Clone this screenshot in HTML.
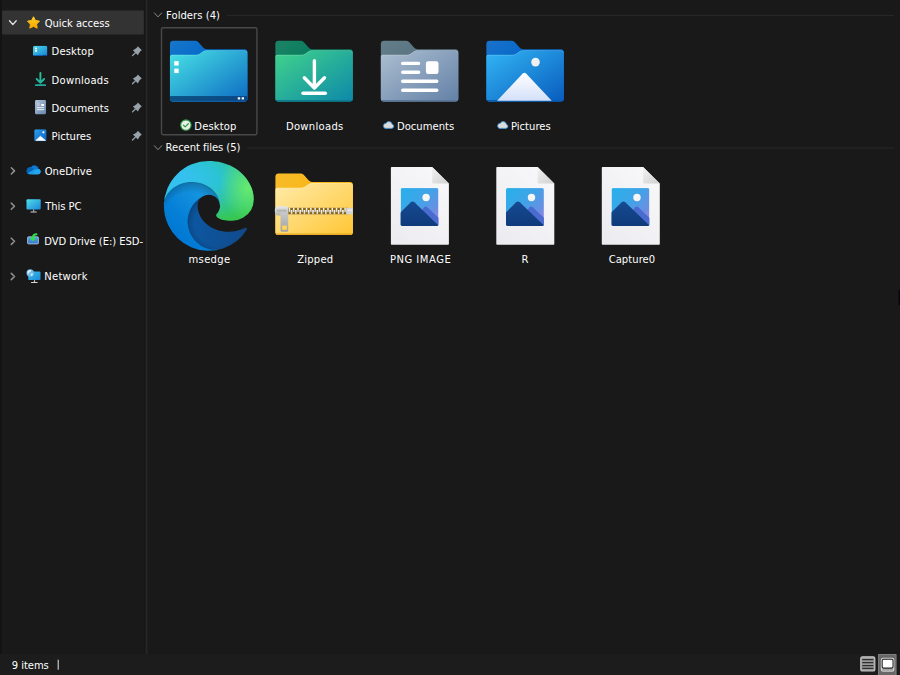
<!DOCTYPE html>
<html lang="en">
<head>
<meta charset="utf-8">
<title>File Explorer - Quick access</title>
<style>
html,body{margin:0;padding:0;}
body{width:900px;height:675px;overflow:hidden;background:#191919;position:relative;font-family:"DejaVu Sans","Liberation Sans",sans-serif;font-size:10.0px;line-height:14px;color:#fff;}
.t{position:absolute;white-space:nowrap;display:block;height:14px;}
.i{position:absolute;display:block;overflow:visible;}
.abs{position:absolute;}
#nav{left:0;top:0;width:146px;height:654px;}
</style>
</head>
<body>
<svg id="chrome" class="i" style="left:0;top:0" width="900" height="675">
<rect id="edge-left" x="0" y="0" width="1.9" height="654" fill="#131313"/>
<rect id="nav-sel" x="2.1" y="10.55" width="141.7" height="24" rx="0.6" fill="#333333"/>
<rect x="144.5" y="0" width="1.2" height="654" fill="#171717"/>
<rect id="split" x="145.6" y="0" width="1.8" height="654" fill="#272727"/>
<rect class="hr" x="227" y="14.9" width="667" height="1" fill="#282828"/>
<rect class="hr" x="247" y="147.5" width="647" height="1" fill="#282828"/>
<rect id="sel-item" x="161.5" y="27.7" width="95.4" height="107" rx="1.6" fill="none" stroke="#494949" stroke-width="1.4"/>
<rect id="status" x="0" y="654" width="900" height="21" fill="#1c1c1c"/>
<rect id="view-large" x="878.1" y="654" width="18.3" height="21" fill="#676767"/>
<path d="M878.6,675 V654.5 H895.9 V675" fill="none" stroke="#808080" stroke-width="1"/>
<rect id="sb-sep" x="57.7" y="659.7" width="1" height="10" fill="#e6e6e6"/>
<rect id="glitch" x="898.6" y="290" width="1.4" height="15" fill="#05050d"/>
</svg>
<nav id="nav" class="abs">
<svg class="i" style="left:8px;top:19px" width="11" height="9"><svg x="0" y="0" width="10" height="8" overflow="visible"><path d="M1.5,1.8 L4.85,5.4 L8.2,1.8" fill="none" stroke="#dedede" stroke-width="1.4" stroke-linecap="round" stroke-linejoin="round"/></svg></svg>
<svg class="i" style="left:26px;top:15px" width="16" height="17"><svg x="0" y="0.1" width="15" height="15" overflow="visible"><defs><linearGradient id="g1" x1="0" y1="0" x2="0" y2="1" gradientUnits="objectBoundingBox"><stop offset="0" stop-color="#ffcf24"/><stop offset="1" stop-color="#f5a600"/></linearGradient></defs><polygon points="7.50,1.70 9.44,5.33 13.49,6.05 10.64,9.02 11.20,13.10 7.50,11.30 3.80,13.10 4.36,9.02 1.51,6.05 5.56,5.33" fill="url(#g1)" stroke="url(#g1)" stroke-width="1" stroke-linejoin="round"/></svg></svg>
<span class="t" style="left:44.64px;top:17px;letter-spacing:-0.016px">Quick access</span>
<svg class="i" style="left:33px;top:45px" width="16" height="13"><svg x="0" y="0.7" width="14.4" height="10.4" overflow="visible"><defs><linearGradient id="g2" x1="0" y1="0" x2="1" y2="1" gradientUnits="objectBoundingBox"><stop offset="0" stop-color="#4fdbe8"/><stop offset="1" stop-color="#157fd6"/></linearGradient><clipPath id="g2c"><rect width="14.4" height="10.3" rx="1.7"/></clipPath></defs><g clip-path="url(#g2c)"><rect width="14.4" height="10.4" fill="url(#g2)"/><rect y="9.2" width="14.4" height="1.2" fill="#0f62b4"/><rect x="2" y="2.0" width="2" height="1.6" fill="#fff"/><rect x="2" y="4.3" width="2" height="1.7" fill="#fff"/></g><rect x="10.1" y="9.6" width="1.1" height="1" fill="#0c2c4c"/><rect x="11.9" y="9.6" width="1.1" height="1" fill="#0c2c4c"/></svg></svg>
<span class="t" style="left:51.62px;top:45px;letter-spacing:0.148px">Desktop</span>
<svg class="i" style="left:132px;top:46px" width="11" height="12"><svg x="0" y="0.1" width="10" height="10" overflow="visible"><path d="M5.8,0.2 L9.8,4.2 Q8.5,4.8 7.8,5.8 Q6.8,7 5.9,9.1 L0.9,4.1 Q3,3.2 4.2,2.2 Q5.2,1.5 5.8,0.2 Z" fill="#98a2aa"/><path d="M3.4,6.6 L0.5,9.5" stroke="#98a2aa" stroke-width="1.3" stroke-linecap="round"/></svg></svg>
<svg class="i" style="left:34px;top:71px" width="14" height="17"><svg x="0" y="0" width="13" height="16" overflow="visible"><defs><linearGradient id="g3" x1="0" y1="71" x2="0" y2="87" gradientUnits="userSpaceOnUse"><stop offset="0" stop-color="#2bc891"/><stop offset="1" stop-color="#1da8a0"/></linearGradient></defs><g transform="translate(0,-71)" stroke="url(#g3)" fill="none" stroke-linecap="round" stroke-linejoin="round"><path d="M6.4,73 V82.4 M2.7,79 L6.4,82.8 L10.1,79" stroke-width="1.9" transform="translate(0,0)"/><path d="M1.8,85.2 H11.2" stroke-width="1.7"/></g></svg></svg>
<span class="t" style="left:51.62px;top:74px;letter-spacing:0.259px">Downloads</span>
<svg class="i" style="left:132px;top:74px" width="11" height="12"><svg x="0" y="0.3" width="10" height="10" overflow="visible"><path d="M5.8,0.2 L9.8,4.2 Q8.5,4.8 7.8,5.8 Q6.8,7 5.9,9.1 L0.9,4.1 Q3,3.2 4.2,2.2 Q5.2,1.5 5.8,0.2 Z" fill="#98a2aa"/><path d="M3.4,6.6 L0.5,9.5" stroke="#98a2aa" stroke-width="1.3" stroke-linecap="round"/></svg></svg>
<svg class="i" style="left:35px;top:99px" width="12" height="17"><svg x="0" y="0.9" width="11" height="14.4" overflow="visible"><defs><linearGradient id="g4" x1="0" y1="0" x2="1" y2="1" gradientUnits="objectBoundingBox"><stop offset="0" stop-color="#b3c2d6"/><stop offset="1" stop-color="#6686b0"/></linearGradient></defs><rect width="11" height="14.4" rx="1.4" fill="url(#g4)"/><rect x="2" y="2.8" width="2.7" height="3.3" fill="#fff" opacity="0.28"/><rect x="6.2" y="4.1" width="2.9" height="2" rx="0.3" fill="#fff"/><rect x="2" y="7.3" width="7.1" height="0.9" fill="#f4f7fb"/><rect x="2" y="9.3" width="7.1" height="0.9" fill="#f4f7fb"/></svg></svg>
<span class="t" style="left:51.62px;top:102px;letter-spacing:0.034px">Documents</span>
<svg class="i" style="left:132px;top:102px" width="11" height="12"><svg x="0" y="0.4" width="10" height="10" overflow="visible"><path d="M5.8,0.2 L9.8,4.2 Q8.5,4.8 7.8,5.8 Q6.8,7 5.9,9.1 L0.9,4.1 Q3,3.2 4.2,2.2 Q5.2,1.5 5.8,0.2 Z" fill="#98a2aa"/><path d="M3.4,6.6 L0.5,9.5" stroke="#98a2aa" stroke-width="1.3" stroke-linecap="round"/></svg></svg>
<svg class="i" style="left:34px;top:129px" width="14" height="14"><svg x="0.2" y="0.2" width="12.4" height="12.1" overflow="visible"><defs><linearGradient id="g5" x1="0" y1="0" x2="1" y2="1" gradientUnits="objectBoundingBox"><stop offset="0" stop-color="#2e9fec"/><stop offset="1" stop-color="#0a62c8"/></linearGradient><clipPath id="g5c"><rect width="12.4" height="12.1" rx="1.6"/></clipPath></defs><g clip-path="url(#g5c)"><rect width="12.4" height="12.1" fill="url(#g5)"/><path d="M6.2,7 L11.3,11.2 H1.6 Z" fill="#fff" stroke="#fff" stroke-width="0.6" stroke-linejoin="round"/><circle cx="9.2" cy="3.1" r="1.1" fill="#fff"/></g></svg></svg>
<span class="t" style="left:51.62px;top:130px;letter-spacing:-0.001px">Pictures</span>
<svg class="i" style="left:132px;top:130px" width="11" height="12"><svg x="0" y="0.5" width="10" height="10" overflow="visible"><path d="M5.8,0.2 L9.8,4.2 Q8.5,4.8 7.8,5.8 Q6.8,7 5.9,9.1 L0.9,4.1 Q3,3.2 4.2,2.2 Q5.2,1.5 5.8,0.2 Z" fill="#98a2aa"/><path d="M3.4,6.6 L0.5,9.5" stroke="#98a2aa" stroke-width="1.3" stroke-linecap="round"/></svg></svg>
<svg class="i" style="left:9px;top:165px" width="9" height="12"><svg x="0" y="0.9" width="8" height="10" overflow="visible"><path d="M2.3,1.9 L5.5,5 L2.3,8.1" fill="none" stroke="#8e8e8e" stroke-width="1.6" stroke-linecap="round" stroke-linejoin="round"/></svg></svg>
<svg class="i" style="left:26px;top:164px" width="17" height="12"><svg x="0.1" y="0.7" width="15" height="10" overflow="visible"><path d="M3.3,9.5 H12 A2.6,2.6 0 0 0 12.6,4.4 A4.2,4.2 0 0 0 4.9,2.6 A3.5,3.5 0 0 0 3.3,9.5 Z" fill="#0f78d4"/><path d="M3.3,9.5 A3.5,3.5 0 0 1 4.9,2.6 Q6,3.2 9.5,5.3 L5,9.5 Z" fill="#0364b8"/><path d="M8.2,4.5 L12.6,4.4 A2.6,2.6 0 0 1 12,9.5 H3.3 Q2.2,9.2 1.6,8.6 Z" fill="#1c9be8"/><path d="M10,5.2 L12.6,4.4 A2.6,2.6 0 0 1 12,9.5 H6 Z" fill="#28a8ea" opacity="0.8"/></svg></svg>
<span class="t" style="left:44.74px;top:165px;letter-spacing:0.013px">OneDrive</span>
<svg class="i" style="left:9px;top:201px" width="9" height="12"><svg x="0" y="0.2" width="8" height="10" overflow="visible"><path d="M2.3,1.9 L5.5,5 L2.3,8.1" fill="none" stroke="#8e8e8e" stroke-width="1.6" stroke-linecap="round" stroke-linejoin="round"/></svg></svg>
<svg class="i" style="left:26px;top:199px" width="16" height="15"><svg x="0.5" y="0.2" width="14.2" height="13.6" overflow="visible"><defs><linearGradient id="g6" x1="0" y1="0" x2="1" y2="1" gradientUnits="objectBoundingBox"><stop offset="0" stop-color="#4fe0e6"/><stop offset="1" stop-color="#1a86dc"/></linearGradient></defs><rect width="14.2" height="10.3" rx="1.1" fill="url(#g6)"/><rect x="6.5" y="10.3" width="1.2" height="2" fill="#a8b0b8"/><rect x="3.9" y="12.2" width="6.4" height="1.1" rx="0.5" fill="#d0d0d0"/></svg></svg>
<span class="t" style="left:45.33px;top:200px;letter-spacing:-0.095px">This PC</span>
<svg class="i" style="left:9px;top:236px" width="9" height="12"><svg x="0" y="0.3" width="8" height="10" overflow="visible"><path d="M2.3,1.9 L5.5,5 L2.3,8.1" fill="none" stroke="#8e8e8e" stroke-width="1.6" stroke-linecap="round" stroke-linejoin="round"/></svg></svg>
<svg class="i" style="left:27px;top:233px" width="14" height="13"><svg x="0" y="0.4" width="12.4" height="11" overflow="visible"><defs><linearGradient id="g7" x1="0" y1="0" x2="0" y2="1" gradientUnits="objectBoundingBox"><stop offset="0" stop-color="#5c9ee6"/><stop offset="1" stop-color="#3878c8"/></linearGradient></defs><rect x="0.6" y="3.4" width="10.8" height="7.1" rx="0.9" fill="url(#g7)" stroke="#b4cfec" stroke-width="0.8"/><path d="M9.5,0.9 Q5.9,1.0 5.8,4.8" fill="none" stroke="#2fe04c" stroke-width="2" stroke-linecap="round"/><path d="M2.6,4.5 H9.1 L5.8,7.7 Z" fill="#2fe04c" stroke="#2fe04c" stroke-width="0.5" stroke-linejoin="round"/></svg></svg>
<span class="t" style="left:44.32px;top:235px;letter-spacing:-0.058px">DVD Drive (E:) ESD-</span>
<svg class="i" style="left:9px;top:271px" width="9" height="12"><svg x="0" y="0.5" width="8" height="10" overflow="visible"><path d="M2.3,1.9 L5.5,5 L2.3,8.1" fill="none" stroke="#8e8e8e" stroke-width="1.6" stroke-linecap="round" stroke-linejoin="round"/></svg></svg>
<svg class="i" style="left:26px;top:269px" width="16" height="16"><svg x="0.3" y="0" width="14.4" height="14.6" overflow="visible"><defs><linearGradient id="g8" x1="0" y1="0" x2="1" y2="1" gradientUnits="objectBoundingBox"><stop offset="0" stop-color="#3cc4e6"/><stop offset="1" stop-color="#1a86dc"/></linearGradient></defs><rect x="2" y="2.5" width="12.2" height="8.6" rx="0.9" fill="url(#g8)"/><rect x="7.6" y="11.1" width="1.2" height="1.9" fill="#b8c0c8"/><rect x="4.6" y="12.9" width="6.8" height="1" rx="0.5" fill="#d8d8d8"/><circle cx="3.9" cy="3.9" r="3.7" fill="#6cbcf0"/><path d="M1.2,2.4 Q3,0.6 4.9,1.2 Q4.6,3 3,3.6 Q2.4,5.2 1.2,4.8 Z" fill="#e4f4fe"/><path d="M4.2,4.8 Q5.8,4 6.9,5 Q6.2,6.8 4.8,7 Z" fill="#d4ecfc"/></svg></svg>
<span class="t" style="left:44.32px;top:270px;letter-spacing:0.237px">Network</span>
</nav>
<main id="main">
<section id="folders">
<svg class="i" style="left:153px;top:11px" width="11" height="10"><svg x="0" y="0.4" width="10" height="8" overflow="visible"><path d="M1.4,1.5 L5,5.5 L8.7,1.5" fill="none" stroke="#8a8a8a" stroke-width="1" stroke-linecap="round" stroke-linejoin="round"/></svg></svg>
<span class="t" style="left:166.02px;top:9px;letter-spacing:0.053px">Folders (4)</span>
<svg class="i" style="left:169px;top:40px" width="80" height="63"><svg x="0.95" y="0.65" width="77.5" height="60.8" viewBox="0 0 78.4 61.4" preserveAspectRatio="none" overflow="visible"><defs><linearGradient id="g10" x1="0.05" y1="0.05" x2="0.95" y2="0.95" gradientUnits="objectBoundingBox"><stop offset="0" stop-color="#45dde3"/><stop offset="1" stop-color="#1070c4"/></linearGradient><linearGradient id="g10h" x1="0" y1="0" x2="0.4" y2="0.3"><stop offset="0" stop-color="#fff" stop-opacity="0.07"/><stop offset="1" stop-color="#fff" stop-opacity="0"/></linearGradient><clipPath id="g10c"><path d="M0,16.3 Q0,14.3 2,14.3 H26.3 Q28.4,14.3 30,13.2 L33.6,10.7 Q35.2,9.6 37.2,9.6 H75.4 Q78.4,9.6 78.4,12.6 V58.4 Q78.4,61.4 75.4,61.4 H3 Q0,61.4 0,58.4 Z"/></clipPath></defs><path d="M0,3.4 Q0,0 3.4,0 H25.3 Q27.3,0 28.6,1.4 L33.8,7.2 Q35,8.6 37,8.6 H75.4 Q78.4,8.6 78.4,11.6 V58.4 Q78.4,61.4 75.4,61.4 H3 Q0,61.4 0,58.4 Z" fill="#066bc8"/><path d="M0,3.4 Q0,0 3.4,0 H25.3 Q27.3,0 28.6,1.4 L33.8,7.2 Q35,8.6 37,8.6 H75.4 Q78.4,8.6 78.4,11.6 V58.4 Q78.4,61.4 75.4,61.4 H3 Q0,61.4 0,58.4 Z" fill="url(#g10h)"/><path d="M0,16.3 Q0,14.3 2,14.3 H26.3 Q28.4,14.3 30,13.2 L33.6,10.7 Q35.2,9.6 37.2,9.6 H75.4 Q78.4,9.6 78.4,12.6 V58.4 Q78.4,61.4 75.4,61.4 H3 Q0,61.4 0,58.4 Z" fill="url(#g10)"/><g clip-path="url(#g10c)"><rect x="0" y="60" width="78.4" height="1.4" fill="#1266b4"/><path d="M0.4,17 V16.3 Q0.4,14.7 2,14.7 H26.3 Q28.4,14.7 30,13.6 L33.6,11.1 Q35.2,10 37.2,10 H75.4 Q78,10 78,12.6" fill="none" stroke="#fff" stroke-opacity="0.22" stroke-width="0.8"/><g transform="scale(1.0116,1.0099) translate(0,0)"><defs><linearGradient id="g9" x1="0" y1="0" x2="1" y2="0" gradientUnits="objectBoundingBox"><stop offset="0" stop-color="#0c5384"/><stop offset="1" stop-color="#0a4684"/></linearGradient></defs><rect x="0" y="55.4" width="78.4" height="6" fill="url(#g9)"/><rect x="0" y="60.2" width="78.4" height="1.2" fill="#1266b4"/><rect x="4.3" y="20.5" width="4.4" height="4.4" fill="#fff"/><rect x="4.3" y="28" width="4.4" height="4.4" fill="#fff"/><rect x="67.8" y="56.6" width="2.4" height="2.2" fill="#f4f8ff"/><rect x="71.7" y="56.6" width="2.4" height="2.2" fill="#f4f8ff"/></g></g></svg></svg>
<svg class="i" style="left:180px;top:119px" width="13" height="14"><svg x="0" y="0.2" width="12" height="12" overflow="visible"><circle cx="5.9" cy="5.9" r="5.2" fill="#e9efe9" stroke="#2f9d40" stroke-width="1.1"/><path d="M3.5,6.1 L5.2,7.7 L8.3,4.5" fill="none" stroke="#2f9d40" stroke-width="1.3" stroke-linecap="round" stroke-linejoin="round"/></svg></svg>
<span class="t" style="left:194.32px;top:120px;letter-spacing:0.115px">Desktop</span>
<svg class="i" style="left:275px;top:40px" width="79" height="63"><svg x="0.35" y="0.65" width="77.5" height="60.8" viewBox="0 0 78.4 61.4" preserveAspectRatio="none" overflow="visible"><defs><linearGradient id="g11" x1="0.05" y1="0.05" x2="0.95" y2="0.95" gradientUnits="objectBoundingBox"><stop offset="0" stop-color="#3fd08c"/><stop offset="1" stop-color="#0f8ca8"/></linearGradient><linearGradient id="g11h" x1="0" y1="0" x2="0.4" y2="0.3"><stop offset="0" stop-color="#fff" stop-opacity="0.07"/><stop offset="1" stop-color="#fff" stop-opacity="0"/></linearGradient><clipPath id="g11c"><path d="M0,16.3 Q0,14.3 2,14.3 H26.3 Q28.4,14.3 30,13.2 L33.6,10.7 Q35.2,9.6 37.2,9.6 H75.4 Q78.4,9.6 78.4,12.6 V58.4 Q78.4,61.4 75.4,61.4 H3 Q0,61.4 0,58.4 Z"/></clipPath></defs><path d="M0,3.4 Q0,0 3.4,0 H25.3 Q27.3,0 28.6,1.4 L33.8,7.2 Q35,8.6 37,8.6 H75.4 Q78.4,8.6 78.4,11.6 V58.4 Q78.4,61.4 75.4,61.4 H3 Q0,61.4 0,58.4 Z" fill="#0b7b5c"/><path d="M0,3.4 Q0,0 3.4,0 H25.3 Q27.3,0 28.6,1.4 L33.8,7.2 Q35,8.6 37,8.6 H75.4 Q78.4,8.6 78.4,11.6 V58.4 Q78.4,61.4 75.4,61.4 H3 Q0,61.4 0,58.4 Z" fill="url(#g11h)"/><path d="M0,16.3 Q0,14.3 2,14.3 H26.3 Q28.4,14.3 30,13.2 L33.6,10.7 Q35.2,9.6 37.2,9.6 H75.4 Q78.4,9.6 78.4,12.6 V58.4 Q78.4,61.4 75.4,61.4 H3 Q0,61.4 0,58.4 Z" fill="url(#g11)"/><g clip-path="url(#g11c)"><rect x="0" y="60" width="78.4" height="1.4" fill="#0c7796"/><path d="M0.4,17 V16.3 Q0.4,14.7 2,14.7 H26.3 Q28.4,14.7 30,13.6 L33.6,11.1 Q35.2,10 37.2,10 H75.4 Q78,10 78,12.6" fill="none" stroke="#fff" stroke-opacity="0.22" stroke-width="0.8"/><g transform="scale(1.0116,1.0099) translate(-0.25,-0.25)"><path d="M39.3,20.4 V46.5 M29.2,37.3 L39.3,47.6 L49.4,37.3" fill="none" stroke="#fff" stroke-width="3.4" stroke-linecap="round" stroke-linejoin="round"/><path d="M27.9,52.8 H50.2" stroke="#fff" stroke-width="3.4" stroke-linecap="round"/></g></g></svg></svg>
<span class="t" style="left:285.92px;top:120px;letter-spacing:0.309px">Downloads</span>
<svg class="i" style="left:380px;top:40px" width="80" height="63"><svg x="0.85" y="0.65" width="77.5" height="60.8" viewBox="0 0 78.4 61.4" preserveAspectRatio="none" overflow="visible"><defs><linearGradient id="g12" x1="0.05" y1="0.05" x2="0.95" y2="0.95" gradientUnits="objectBoundingBox"><stop offset="0" stop-color="#a9bccf"/><stop offset="1" stop-color="#6683a8"/></linearGradient><linearGradient id="g12h" x1="0" y1="0" x2="0.4" y2="0.3"><stop offset="0" stop-color="#fff" stop-opacity="0.07"/><stop offset="1" stop-color="#fff" stop-opacity="0"/></linearGradient><clipPath id="g12c"><path d="M0,16.3 Q0,14.3 2,14.3 H26.3 Q28.4,14.3 30,13.2 L33.6,10.7 Q35.2,9.6 37.2,9.6 H75.4 Q78.4,9.6 78.4,12.6 V58.4 Q78.4,61.4 75.4,61.4 H3 Q0,61.4 0,58.4 Z"/></clipPath></defs><path d="M0,3.4 Q0,0 3.4,0 H25.3 Q27.3,0 28.6,1.4 L33.8,7.2 Q35,8.6 37,8.6 H75.4 Q78.4,8.6 78.4,11.6 V58.4 Q78.4,61.4 75.4,61.4 H3 Q0,61.4 0,58.4 Z" fill="#5a7482"/><path d="M0,3.4 Q0,0 3.4,0 H25.3 Q27.3,0 28.6,1.4 L33.8,7.2 Q35,8.6 37,8.6 H75.4 Q78.4,8.6 78.4,11.6 V58.4 Q78.4,61.4 75.4,61.4 H3 Q0,61.4 0,58.4 Z" fill="url(#g12h)"/><path d="M0,16.3 Q0,14.3 2,14.3 H26.3 Q28.4,14.3 30,13.2 L33.6,10.7 Q35.2,9.6 37.2,9.6 H75.4 Q78.4,9.6 78.4,12.6 V58.4 Q78.4,61.4 75.4,61.4 H3 Q0,61.4 0,58.4 Z" fill="url(#g12)"/><g clip-path="url(#g12c)"><rect x="0" y="60" width="78.4" height="1.4" fill="#5a7698"/><path d="M0.4,17 V16.3 Q0.4,14.7 2,14.7 H26.3 Q28.4,14.7 30,13.6 L33.6,11.1 Q35.2,10 37.2,10 H75.4 Q78,10 78,12.6" fill="none" stroke="#fff" stroke-opacity="0.22" stroke-width="0.8"/><g transform="scale(1.0116,1.0099) translate(-0.25,-0.25)"><path d="M22.1,23 H38 M22.1,31.9 H38 M22.1,40.9 H56.2 M22.1,49.9 H56.2" stroke="#fff" stroke-width="3.4" stroke-linecap="round"/><rect x="45.3" y="20.8" width="12.6" height="12.8" rx="2.2" fill="#fff"/></g></g></svg></svg>
<svg class="i" style="left:382px;top:121px" width="14" height="9"><svg x="0.3" y="0" width="12" height="8" overflow="visible"><path d="M2.8,7.4 H9.4 A2.1,2.1 0 0 0 9.9,3.3 A3.3,3.3 0 0 0 3.8,2.2 A2.7,2.7 0 0 0 2.8,7.4 Z" fill="#dcdcdc" stroke="#3a92d8" stroke-width="0.9"/></svg></svg>
<span class="t" style="left:396.92px;top:120px;letter-spacing:0.034px">Documents</span>
<svg class="i" style="left:486px;top:40px" width="79" height="63"><svg x="0.35" y="0.65" width="77.5" height="60.8" viewBox="0 0 78.4 61.4" preserveAspectRatio="none" overflow="visible"><defs><linearGradient id="g14" x1="0.05" y1="0.05" x2="0.95" y2="0.95" gradientUnits="objectBoundingBox"><stop offset="0" stop-color="#31b2f2"/><stop offset="1" stop-color="#0a60c0"/></linearGradient><linearGradient id="g14h" x1="0" y1="0" x2="0.4" y2="0.3"><stop offset="0" stop-color="#fff" stop-opacity="0.07"/><stop offset="1" stop-color="#fff" stop-opacity="0"/></linearGradient><clipPath id="g14c"><path d="M0,16.3 Q0,14.3 2,14.3 H26.3 Q28.4,14.3 30,13.2 L33.6,10.7 Q35.2,9.6 37.2,9.6 H75.4 Q78.4,9.6 78.4,12.6 V58.4 Q78.4,61.4 75.4,61.4 H3 Q0,61.4 0,58.4 Z"/></clipPath></defs><path d="M0,3.4 Q0,0 3.4,0 H25.3 Q27.3,0 28.6,1.4 L33.8,7.2 Q35,8.6 37,8.6 H75.4 Q78.4,8.6 78.4,11.6 V58.4 Q78.4,61.4 75.4,61.4 H3 Q0,61.4 0,58.4 Z" fill="#0868c8"/><path d="M0,3.4 Q0,0 3.4,0 H25.3 Q27.3,0 28.6,1.4 L33.8,7.2 Q35,8.6 37,8.6 H75.4 Q78.4,8.6 78.4,11.6 V58.4 Q78.4,61.4 75.4,61.4 H3 Q0,61.4 0,58.4 Z" fill="url(#g14h)"/><path d="M0,16.3 Q0,14.3 2,14.3 H26.3 Q28.4,14.3 30,13.2 L33.6,10.7 Q35.2,9.6 37.2,9.6 H75.4 Q78.4,9.6 78.4,12.6 V58.4 Q78.4,61.4 75.4,61.4 H3 Q0,61.4 0,58.4 Z" fill="url(#g14)"/><g clip-path="url(#g14c)"><rect x="0" y="60" width="78.4" height="1.4" fill="#0a58b0"/><path d="M0.4,17 V16.3 Q0.4,14.7 2,14.7 H26.3 Q28.4,14.7 30,13.6 L33.6,11.1 Q35.2,10 37.2,10 H75.4 Q78,10 78,12.6" fill="none" stroke="#fff" stroke-opacity="0.22" stroke-width="0.8"/><g transform="scale(1.0116,1.0099) translate(-0.25,-0.25)"><defs><linearGradient id="g13" x1="0" y1="0" x2="0" y2="1" gradientUnits="objectBoundingBox"><stop offset="0" stop-color="#ffffff"/><stop offset="1" stop-color="#d4e0fa"/></linearGradient></defs><path d="M11,60.4 L36.6,33.2 Q38.3,31.4 40,33.2 L65.6,60.4 Z" fill="url(#g13)"/><circle cx="49.4" cy="21.7" r="4.3" fill="#f0f0f0"/></g></g></svg></svg>
<svg class="i" style="left:496px;top:121px" width="14" height="9"><svg x="0.5" y="0" width="12" height="8" overflow="visible"><path d="M2.8,7.4 H9.4 A2.1,2.1 0 0 0 9.9,3.3 A3.3,3.3 0 0 0 3.8,2.2 A2.7,2.7 0 0 0 2.8,7.4 Z" fill="#dcdcdc" stroke="#3a92d8" stroke-width="0.9"/></svg></svg>
<span class="t" style="left:510.92px;top:120px;letter-spacing:0.027px">Pictures</span>
</section>
<section id="recent">
<svg class="i" style="left:153px;top:144px" width="11" height="10"><svg x="0" y="0.2" width="10" height="8" overflow="visible"><path d="M1.4,1.5 L5,5.5 L8.7,1.5" fill="none" stroke="#8a8a8a" stroke-width="1" stroke-linecap="round" stroke-linejoin="round"/></svg></svg>
<span class="t" style="left:165.62px;top:141px;letter-spacing:-0.049px">Recent files (5)</span>
<svg class="i" style="left:163px;top:161px" width="92" height="91"><svg x="0.9" y="0" width="89.8" height="89.8" viewBox="0 0 256 256" preserveAspectRatio="none" overflow="visible"><defs>
<radialGradient id="eb" cx="161.83" cy="68.91" r="95.38" gradientTransform="matrix(1 0 0 -.95 0 248.84)" gradientUnits="userSpaceOnUse"><stop offset=".72" stop-opacity="0"/><stop offset=".95" stop-opacity=".53"/><stop offset="1"/></radialGradient>
<radialGradient id="ed" cx="-340.29" cy="62.99" r="143.24" gradientTransform="matrix(.15 -.99 -.8 -.12 176.64 -125.4)" gradientUnits="userSpaceOnUse"><stop offset=".76" stop-opacity="0"/><stop offset=".95" stop-opacity=".5"/><stop offset="1"/></radialGradient>
<radialGradient id="ee" cx="113.37" cy="570.21" r="202.43" gradientTransform="matrix(-.04 1 2.13 .08 -1179.54 -106.69)" gradientUnits="userSpaceOnUse"><stop offset="0" stop-color="#35c1f1"/><stop offset=".11" stop-color="#34c1ed"/><stop offset=".23" stop-color="#2fc2df"/><stop offset=".31" stop-color="#2bc3d2"/><stop offset=".67" stop-color="#36c752"/></radialGradient>
<radialGradient id="ef" cx="376.52" cy="567.97" r="97.34" gradientTransform="matrix(.28 .96 .78 -.23 -303.76 -148.5)" gradientUnits="userSpaceOnUse"><stop offset="0" stop-color="#66eb6e"/><stop offset="1" stop-color="#66eb6e" stop-opacity="0"/></radialGradient>
<linearGradient id="ea" x1="63.33" y1="84.03" x2="241.67" y2="84.03" gradientTransform="matrix(1 0 0 -1 0 266)" gradientUnits="userSpaceOnUse"><stop offset="0" stop-color="#0c59a4"/><stop offset="1" stop-color="#114a8b"/></linearGradient>
<linearGradient id="ec" x1="157.35" y1="161.39" x2="45.96" y2="40.06" gradientTransform="matrix(1 0 0 -1 0 266)" gradientUnits="userSpaceOnUse"><stop offset="0" stop-color="#1b9de2"/><stop offset=".16" stop-color="#1595df"/><stop offset=".67" stop-color="#0680d7"/><stop offset="1" stop-color="#0078d4"/></linearGradient>
</defs><path d="M235.68 195.46a93.730 93.730 0 0 1-10.540 4.710 101.870 101.870 0 0 1-35.900 6.460c-47.320 0-88.540-32.550-88.540-74.320A31.480 31.480 0 0 1 117.130 105c-42.800 1.800-53.800 46.400-53.800 72.530 0 73.880 68.090 81.370 82.760 81.370 7.910 0 19.840-2.300 27-4.560l1.310-.44a128.340 128.340 0 0 0 66.600-52.800 4 4 0 0 0-5.320-5.640Z" transform="translate(-4.63 -4.92)" fill="url(#ea)"/><path d="M235.68 195.46a93.730 93.730 0 0 1-10.540 4.710 101.870 101.870 0 0 1-35.900 6.460c-47.320 0-88.540-32.550-88.540-74.320A31.480 31.480 0 0 1 117.130 105c-42.800 1.800-53.800 46.400-53.800 72.530 0 73.880 68.090 81.370 82.760 81.370 7.910 0 19.840-2.300 27-4.560l1.310-.44a128.340 128.340 0 0 0 66.600-52.800 4 4 0 0 0-5.320-5.640Z" transform="translate(-4.63 -4.92)" fill="url(#eb)" opacity=".35"/><path d="M110.340 246.340A79.200 79.200 0 0 1 87.600 225a80.720 80.720 0 0 1 29.530-120c3.120-1.470 8.450-4.130 15.540-4a32.350 32.350 0 0 1 25.690 13 31.880 31.880 0 0 1 6.360 18.660c0-.21 24.460-79.600-80-79.600-43.900 0-80 41.660-80 78.210a130.150 130.150 0 0 0 12.110 56 128 128 0 0 0 156.380 67.110 75.550 75.550 0 0 1-62.780-8Z" transform="translate(-4.63 -4.92)" fill="url(#ec)"/><path d="M110.340 246.340A79.200 79.200 0 0 1 87.600 225a80.720 80.720 0 0 1 29.530-120c3.120-1.470 8.450-4.130 15.540-4a32.350 32.350 0 0 1 25.690 13 31.880 31.880 0 0 1 6.360 18.660c0-.21 24.460-79.600-80-79.600-43.900 0-80 41.660-80 78.210a130.150 130.150 0 0 0 12.110 56 128 128 0 0 0 156.380 67.110 75.550 75.550 0 0 1-62.780-8Z" transform="translate(-4.63 -4.92)" fill="url(#ed)" opacity=".41"/><path d="M156.940 153.780c-.81 1.050-3.300 2.500-3.300 5.660 0 2.610 1.700 5.120 4.720 7.230 14.380 10 41.490 8.680 41.560 8.680a59.560 59.560 0 0 0 30.270-8.350 61.380 61.380 0 0 0 30.430-52.880c.26-22.410-8-37.310-11.340-43.910-21.190-41.450-66.930-65.290-116.670-65.290a128 128 0 0 0-128 126.200c.48-36.540 36.800-66.050 80-66.050 3.500 0 23.460.34 42 10.070 16.340 8.580 24.900 18.940 30.850 29.210 6.180 10.670 7.280 24.150 7.280 29.520s-2.740 13.330-7.800 19.910Z" transform="translate(-4.63 -4.92)" fill="url(#ee)"/><path d="M156.940 153.780c-.81 1.050-3.300 2.500-3.300 5.660 0 2.610 1.700 5.120 4.720 7.230 14.380 10 41.490 8.680 41.560 8.680a59.560 59.560 0 0 0 30.270-8.350 61.380 61.380 0 0 0 30.430-52.880c.26-22.410-8-37.310-11.340-43.910-21.190-41.450-66.930-65.290-116.670-65.290a128 128 0 0 0-128 126.200c.48-36.540 36.800-66.050 80-66.050 3.500 0 23.460.34 42 10.070 16.340 8.580 24.900 18.940 30.850 29.210 6.180 10.670 7.280 24.150 7.280 29.520s-2.740 13.330-7.800 19.910Z" transform="translate(-4.63 -4.92)" fill="url(#ef)"/></svg></svg>
<svg class="i" style="left:275px;top:173px" width="79" height="63"><svg x="0.4" y="0.4" width="77.5" height="61.5" viewBox="0 0 78.4 61.4" preserveAspectRatio="none" overflow="visible"><defs><linearGradient id="g16" x1="0.05" y1="0.05" x2="0.95" y2="0.95" gradientUnits="objectBoundingBox"><stop offset="0" stop-color="#ffe9a4"/><stop offset="1" stop-color="#ffc83a"/></linearGradient><linearGradient id="g16h" x1="0" y1="0" x2="0.4" y2="0.3"><stop offset="0" stop-color="#fff" stop-opacity="0.07"/><stop offset="1" stop-color="#fff" stop-opacity="0"/></linearGradient><clipPath id="g16c"><path d="M0,16.3 Q0,14.3 2,14.3 H26.3 Q28.4,14.3 30,13.2 L33.6,10.7 Q35.2,9.6 37.2,9.6 H75.4 Q78.4,9.6 78.4,12.6 V58.4 Q78.4,61.4 75.4,61.4 H3 Q0,61.4 0,58.4 Z"/></clipPath></defs><path d="M0,3.4 Q0,0 3.4,0 H25.3 Q27.3,0 28.6,1.4 L33.8,7.2 Q35,8.6 37,8.6 H75.4 Q78.4,8.6 78.4,11.6 V58.4 Q78.4,61.4 75.4,61.4 H3 Q0,61.4 0,58.4 Z" fill="#f8b71a"/><path d="M0,3.4 Q0,0 3.4,0 H25.3 Q27.3,0 28.6,1.4 L33.8,7.2 Q35,8.6 37,8.6 H75.4 Q78.4,8.6 78.4,11.6 V58.4 Q78.4,61.4 75.4,61.4 H3 Q0,61.4 0,58.4 Z" fill="url(#g16h)"/><path d="M0,16.3 Q0,14.3 2,14.3 H26.3 Q28.4,14.3 30,13.2 L33.6,10.7 Q35.2,9.6 37.2,9.6 H75.4 Q78.4,9.6 78.4,12.6 V58.4 Q78.4,61.4 75.4,61.4 H3 Q0,61.4 0,58.4 Z" fill="url(#g16)"/><g clip-path="url(#g16c)"><rect x="0" y="60" width="78.4" height="1.4" fill="#e9a71e"/><path d="M0.4,17 V16.3 Q0.4,14.7 2,14.7 H26.3 Q28.4,14.7 30,13.6 L33.6,11.1 Q35.2,10 37.2,10 H75.4 Q78,10 78,12.6" fill="none" stroke="#fff" stroke-opacity="0.22" stroke-width="0.8"/><g transform="scale(1.0116,0.9984) translate(-0.3,-0.1)"><defs><linearGradient id="g15t" x1="0" y1="0" x2="0" y2="1" gradientUnits="objectBoundingBox"><stop offset="0" stop-color="#ffffff"/><stop offset="1" stop-color="#cfcfcf"/></linearGradient></defs><rect x="11" y="34.5" width="62" height="6.5" fill="#8a6512"/><rect x="13.60" y="34.5" width="1.5" height="4.3" fill="url(#g15t)"/><rect x="15.70" y="36.7" width="1.6" height="4.3" fill="url(#g15t)"/><rect x="17.88" y="34.5" width="1.5" height="4.3" fill="url(#g15t)"/><rect x="19.98" y="36.7" width="1.6" height="4.3" fill="url(#g15t)"/><rect x="22.16" y="34.5" width="1.5" height="4.3" fill="url(#g15t)"/><rect x="24.26" y="36.7" width="1.6" height="4.3" fill="url(#g15t)"/><rect x="26.44" y="34.5" width="1.5" height="4.3" fill="url(#g15t)"/><rect x="28.54" y="36.7" width="1.6" height="4.3" fill="url(#g15t)"/><rect x="30.72" y="34.5" width="1.5" height="4.3" fill="url(#g15t)"/><rect x="32.82" y="36.7" width="1.6" height="4.3" fill="url(#g15t)"/><rect x="35.00" y="34.5" width="1.5" height="4.3" fill="url(#g15t)"/><rect x="37.10" y="36.7" width="1.6" height="4.3" fill="url(#g15t)"/><rect x="39.28" y="34.5" width="1.5" height="4.3" fill="url(#g15t)"/><rect x="41.38" y="36.7" width="1.6" height="4.3" fill="url(#g15t)"/><rect x="43.56" y="34.5" width="1.5" height="4.3" fill="url(#g15t)"/><rect x="45.66" y="36.7" width="1.6" height="4.3" fill="url(#g15t)"/><rect x="47.84" y="34.5" width="1.5" height="4.3" fill="url(#g15t)"/><rect x="49.94" y="36.7" width="1.6" height="4.3" fill="url(#g15t)"/><rect x="52.12" y="34.5" width="1.5" height="4.3" fill="url(#g15t)"/><rect x="54.22" y="36.7" width="1.6" height="4.3" fill="url(#g15t)"/><rect x="56.40" y="34.5" width="1.5" height="4.3" fill="url(#g15t)"/><rect x="58.50" y="36.7" width="1.6" height="4.3" fill="url(#g15t)"/><rect x="60.68" y="34.5" width="1.5" height="4.3" fill="url(#g15t)"/><rect x="62.78" y="36.7" width="1.6" height="4.3" fill="url(#g15t)"/><rect x="64.96" y="34.5" width="1.5" height="4.3" fill="url(#g15t)"/><rect x="67.06" y="36.7" width="1.6" height="4.3" fill="url(#g15t)"/><rect x="69.24" y="34.5" width="1.5" height="4.3" fill="url(#g15t)"/><rect x="71.34" y="36.7" width="1.6" height="4.3" fill="url(#g15t)"/><rect x="71.1" y="34.5" width="7.4" height="6.5" fill="#d4d4d4"/><rect x="72.6" y="36.2" width="4.4" height="1.2" fill="#f0f0f0"/></g></g><defs><linearGradient id="g15s" x1="0" y1="0" x2="0" y2="1" gradientUnits="objectBoundingBox"><stop offset="0" stop-color="#e6e6e6"/><stop offset="1" stop-color="#b4b4b4"/></linearGradient><linearGradient id="g15p" x1="0" y1="0" x2="0" y2="1" gradientUnits="objectBoundingBox"><stop offset="0" stop-color="#c8c8c8"/><stop offset="1" stop-color="#a2a2a2"/></linearGradient></defs><path d="M2.2,32.9 H11 Q13,32.9 13,34.9 V40 Q13,42 11,42 H2.2 Q-0.6,42 -0.6,37.4 Q-0.6,32.9 2.2,32.9 Z" fill="url(#g15s)"/><rect x="1.8" y="36.2" width="9.6" height="1.8" fill="#9c9c9c" opacity="0.55"/><path d="M5.2,39.2 H13 V57.1 Q13,58.2 11.9,58.2 H6.3 Q5.2,58.2 5.2,57.1 Z" fill="url(#g15p)"/><rect x="6.9" y="52.1" width="4.7" height="4.2" fill="#ffd552"/></svg></svg>
<svg class="i" style="left:390px;top:167px" width="60" height="79"><svg x="0.9" y="0" width="58" height="77.8" overflow="visible"><defs><linearGradient id="g17p" x1="0.8" y1="0" x2="0.1" y2="1" gradientUnits="objectBoundingBox"><stop offset="0" stop-color="#f8f8fa"/><stop offset="1" stop-color="#ececf0"/></linearGradient><linearGradient id="g17f" x1="0" y1="0" x2="1" y2="1" gradientUnits="objectBoundingBox"><stop offset="0" stop-color="#f2f2f2"/><stop offset="1" stop-color="#cfcfcf"/></linearGradient><linearGradient id="g17s" x1="0" y1="0" x2="1" y2="0.9" gradientUnits="objectBoundingBox"><stop offset="0" stop-color="#27b0ea"/><stop offset="0.45" stop-color="#3fa4e8"/><stop offset="0.8" stop-color="#6c8ee2"/><stop offset="1" stop-color="#a886e4"/></linearGradient><linearGradient id="g17m" x1="0" y1="0" x2="0" y2="1" gradientUnits="objectBoundingBox"><stop offset="0" stop-color="#164a92"/><stop offset="1" stop-color="#0f3a7a"/></linearGradient><clipPath id="g17c"><rect x="9.7" y="21.1" width="37.9" height="37.8" rx="1.6"/></clipPath></defs><path d="M0.8,0 H41.3 L58,16.5 V77.0 Q58,77.8 57.2,77.8 H0.8 Q0,77.8 0,77.0 V0.8 Q0,0 0.8,0 Z" fill="url(#g17p)"/><path d="M41.3,0 L58,16.5 H42.8 Q41.3,16.5 41.3,15 Z" fill="url(#g17f)"/><g clip-path="url(#g17c)"><rect x="9.7" y="21.1" width="37.9" height="37.8" fill="url(#g17s)"/><path d="M33.2,40.2 Q34.8,38.6 36.4,40.2 L50,53 V60 H20 Z" fill="#4a6cd0"/><path d="M9,46 L19.9,35.3 Q21.7,33.7 23.5,35.3 L48.6,59.4 H9 Z" fill="url(#g17m)"/><circle cx="35.2" cy="30.5" r="3.7" fill="#f6f6f6"/></g></svg></svg>
<svg class="i" style="left:496px;top:167px" width="60" height="79"><svg x="0.3" y="0" width="58" height="77.8" overflow="visible"><defs><linearGradient id="g18p" x1="0.8" y1="0" x2="0.1" y2="1" gradientUnits="objectBoundingBox"><stop offset="0" stop-color="#f8f8fa"/><stop offset="1" stop-color="#ececf0"/></linearGradient><linearGradient id="g18f" x1="0" y1="0" x2="1" y2="1" gradientUnits="objectBoundingBox"><stop offset="0" stop-color="#f2f2f2"/><stop offset="1" stop-color="#cfcfcf"/></linearGradient><linearGradient id="g18s" x1="0" y1="0" x2="1" y2="0.9" gradientUnits="objectBoundingBox"><stop offset="0" stop-color="#27b0ea"/><stop offset="0.45" stop-color="#3fa4e8"/><stop offset="0.8" stop-color="#6c8ee2"/><stop offset="1" stop-color="#a886e4"/></linearGradient><linearGradient id="g18m" x1="0" y1="0" x2="0" y2="1" gradientUnits="objectBoundingBox"><stop offset="0" stop-color="#164a92"/><stop offset="1" stop-color="#0f3a7a"/></linearGradient><clipPath id="g18c"><rect x="9.7" y="21.1" width="37.9" height="37.8" rx="1.6"/></clipPath></defs><path d="M0.8,0 H41.3 L58,16.5 V77.0 Q58,77.8 57.2,77.8 H0.8 Q0,77.8 0,77.0 V0.8 Q0,0 0.8,0 Z" fill="url(#g18p)"/><path d="M41.3,0 L58,16.5 H42.8 Q41.3,16.5 41.3,15 Z" fill="url(#g18f)"/><g clip-path="url(#g18c)"><rect x="9.7" y="21.1" width="37.9" height="37.8" fill="url(#g18s)"/><path d="M33.2,40.2 Q34.8,38.6 36.4,40.2 L50,53 V60 H20 Z" fill="#4a6cd0"/><path d="M9,46 L19.9,35.3 Q21.7,33.7 23.5,35.3 L48.6,59.4 H9 Z" fill="url(#g18m)"/><circle cx="35.2" cy="30.5" r="3.7" fill="#f6f6f6"/></g></svg></svg>
<svg class="i" style="left:601px;top:167px" width="60" height="79"><svg x="0.8" y="0" width="58" height="77.8" overflow="visible"><defs><linearGradient id="g19p" x1="0.8" y1="0" x2="0.1" y2="1" gradientUnits="objectBoundingBox"><stop offset="0" stop-color="#f8f8fa"/><stop offset="1" stop-color="#ececf0"/></linearGradient><linearGradient id="g19f" x1="0" y1="0" x2="1" y2="1" gradientUnits="objectBoundingBox"><stop offset="0" stop-color="#f2f2f2"/><stop offset="1" stop-color="#cfcfcf"/></linearGradient><linearGradient id="g19s" x1="0" y1="0" x2="1" y2="0.9" gradientUnits="objectBoundingBox"><stop offset="0" stop-color="#27b0ea"/><stop offset="0.45" stop-color="#3fa4e8"/><stop offset="0.8" stop-color="#6c8ee2"/><stop offset="1" stop-color="#a886e4"/></linearGradient><linearGradient id="g19m" x1="0" y1="0" x2="0" y2="1" gradientUnits="objectBoundingBox"><stop offset="0" stop-color="#164a92"/><stop offset="1" stop-color="#0f3a7a"/></linearGradient><clipPath id="g19c"><rect x="9.7" y="21.1" width="37.9" height="37.8" rx="1.6"/></clipPath></defs><path d="M0.8,0 H41.3 L58,16.5 V77.0 Q58,77.8 57.2,77.8 H0.8 Q0,77.8 0,77.0 V0.8 Q0,0 0.8,0 Z" fill="url(#g19p)"/><path d="M41.3,0 L58,16.5 H42.8 Q41.3,16.5 41.3,15 Z" fill="url(#g19f)"/><g clip-path="url(#g19c)"><rect x="9.7" y="21.1" width="37.9" height="37.8" fill="url(#g19s)"/><path d="M33.2,40.2 Q34.8,38.6 36.4,40.2 L50,53 V60 H20 Z" fill="#4a6cd0"/><path d="M9,46 L19.9,35.3 Q21.7,33.7 23.5,35.3 L48.6,59.4 H9 Z" fill="url(#g19m)"/><circle cx="35.2" cy="30.5" r="3.7" fill="#f6f6f6"/></g></svg></svg>
<span class="t" style="left:188.59px;top:253px;letter-spacing:0.302px">msedge</span>
<span class="t" style="left:297.15px;top:253px;letter-spacing:0.235px">Zipped</span>
<span class="t" style="left:389.92px;top:253px;letter-spacing:0.506px">PNG IMAGE</span>
<span class="t" style="left:521.52px;top:253px;letter-spacing:0.000px">R</span>
<span class="t" style="left:608.64px;top:253px;letter-spacing:0.057px">Capture0</span>
</section>
</main>
<footer id="statusbar">
<span class="t" style="left:11.87px;top:659px;letter-spacing:-0.067px">9 items</span>
<svg class="i" style="left:860px;top:656px" width="17" height="17"><svg x="0" y="0" width="16" height="16" overflow="visible"><rect x="0.8" y="0.8" width="14" height="14.2" rx="1.6" fill="#9a9a9a" stroke="#c4c4c4" stroke-width="1.2"/><path d="M2.2,3.6 H13.4 M2.2,6.6 H13.4 M2.2,9.6 H13.4 M2.2,12.4 H13.4" stroke="#2e2e2e" stroke-width="1.1"/></svg></svg>
<svg class="i" style="left:880px;top:657px" width="17" height="17"><svg x="0" y="0" width="16" height="16" overflow="visible"><rect x="0.8" y="0.8" width="13.6" height="13.9" rx="2.2" fill="#cfcfcf"/><rect x="1.7" y="1.7" width="11.8" height="10" rx="2" fill="#1c1c1c"/><rect x="2.7" y="2.8" width="9.8" height="7.7" rx="0.9" fill="#ffffff"/><rect x="2.2" y="12.5" width="10.8" height="0.9" fill="#7a7a7a"/></svg></svg>
</footer>
</body>
</html>
